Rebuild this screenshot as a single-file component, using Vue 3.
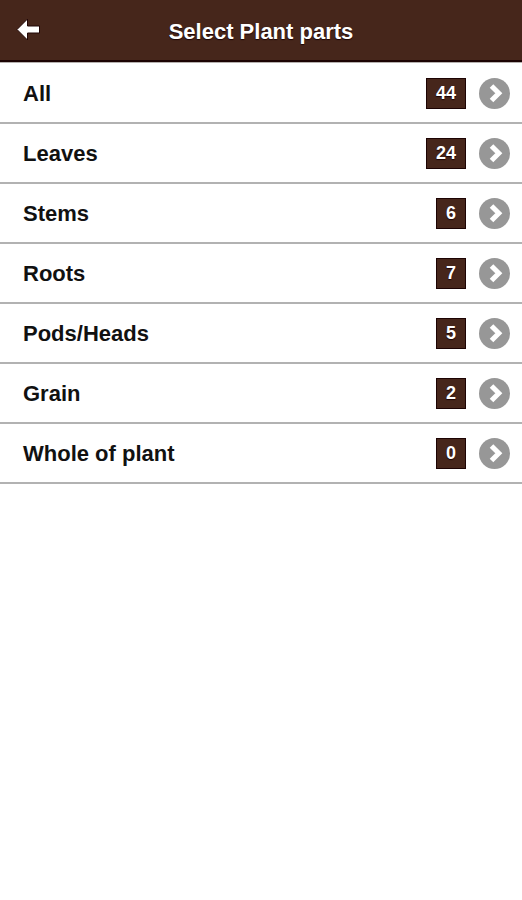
<template>
  <div class="page">
    <header class="header">
      <button class="back-btn" type="button" aria-label="Back">
        <svg width="26" height="26" viewBox="0 0 26 26">
          <path
            d="M2 12.500 L12.500 2 V9 H24.500 V16 H12.500 V23 Z"
            fill="#fff"
            stroke="#210606"
            stroke-width="1"
          />
        </svg>
      </button>
      <h1>Select Plant parts</h1>
    </header>

    <ul class="part-list">
      <li v-for="part in parts" :key="part.name">
        <a href="#" class="part-row" @click.prevent="selectPart(part)">
          <span class="part-name">{{ part.name }}</span>
          <span class="count">{{ part.count }}</span>
          <svg class="chevron" width="31" height="31" viewBox="0 0 31 31">
            <circle cx="15.500" cy="15.500" r="15.500" fill="#979797" />
            <path
              d="M12.500 8 L19.800 15.300 L12.500 22.600"
              fill="none"
              stroke="#fff"
              stroke-width="5"
            />
          </svg>
        </a>
      </li>
    </ul>
  </div>
</template>

<script setup>
import { ref } from 'vue'

const emit = defineEmits(['select'])

const parts = ref([
  { name: 'All', count: 44 },
  { name: 'Leaves', count: 24 },
  { name: 'Stems', count: 6 },
  { name: 'Roots', count: 7 },
  { name: 'Pods/Heads', count: 5 },
  { name: 'Grain', count: 2 },
  { name: 'Whole of plant', count: 0 }
])

const selectPart = (part) => {
  emit('select', part.name)
}
</script>

<style>
body {
  margin: 0;
  background: #fff;
}
</style>

<style scoped>
.page {
  min-height: 100vh;
  font-family: 'Liberation Sans', Arial, sans-serif;
  font-weight: bold;
  color: #111;
}

/* Header */
.header {
  display: grid;
  grid-template-columns: 56px 1fr 56px;
  align-items: center;
  height: 60px;
  background: #46261b;
  border-bottom: 2px solid #1c0303;
}

.back-btn {
  display: flex;
  align-items: center;
  justify-content: center;
  height: 60px;
  padding: 0;
  border: none;
  background: none;
  cursor: pointer;
}

h1 {
  margin: 0;
  padding-top: 4px;
  font-size: 22px;
  line-height: 28px;
  text-align: center;
  color: #fff;
  text-shadow: 0 1px 1px #1c0303;
}

/* List */
.part-list {
  margin: 0;
  padding: 1px 0 0;
  border-top: 1px solid #b5b0ae;
  list-style: none;
}

.part-row {
  display: flex;
  align-items: center;
  box-sizing: border-box;
  height: 60px;
  padding: 0 12px 0 23px;
  border-bottom: 2px solid #b2b2b2;
  color: inherit;
  text-decoration: none;
}

.part-name {
  flex: 1;
  padding-top: 2px;
  font-size: 22px;
  line-height: 28px;
}

.count {
  padding: 0 9px;
  border: 1px solid #1c0303;
  background: #46261b;
  color: #fff;
  font-size: 18px;
  line-height: 29px;
  text-shadow: 0 1px 1px #1c0303;
}

.chevron {
  margin-left: 13px;
}
</style>
